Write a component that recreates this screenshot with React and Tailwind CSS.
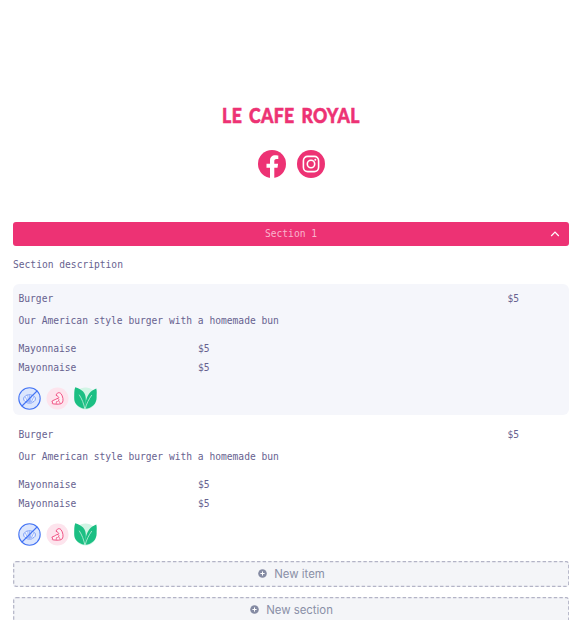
const mono = "font-['DejaVu_Sans_Mono',monospace] text-[9.62px] leading-[16px] whitespace-pre";

function Facebook() {
  return (
    <svg className="h-7 w-7" viewBox="0 0 28 28">
      <circle cx="14" cy="14" r="14" fill="#ed3274" />
      <path d="M12 29V17.8H8.5v-4H12v-3.1c0-3.5 2-5.4 5.2-5.4 1.5 0 3.1.3 3.1.3V9h-1.8c-1.7 0-2.2 1-2.2 2.1v2.7h3.8l-.6 4h-3.2V29z" fill="#fff" />
    </svg>
  );
}

function Instagram() {
  return (
    <svg className="h-7 w-7" viewBox="0 0 28 28" fill="none" stroke="#fff" strokeWidth="1.6">
      <circle cx="14" cy="14" r="14" fill="#ed3274" stroke="none" />
      <rect x="6.4" y="6.4" width="15.2" height="15.2" rx="4.3" />
      <circle cx="14" cy="14" r="3.7" />
      <circle cx="18.3" cy="9.7" r="1" fill="#fff" stroke="none" />
    </svg>
  );
}

function Shellfish() {
  return (
    <svg className="h-[23px] w-[23px]" viewBox="0 0 23 23" fill="none" stroke="#4474f4" strokeLinecap="round" strokeLinejoin="round">
      <circle cx="11.5" cy="11.5" r="10.7" fill="#dce6fd" strokeWidth="1.1" />
      <path d="M8.5 15.2C6.2 14.6 5 12.4 5.9 10.6c.4-1 1.1-1.2 1.7-1.5.7-1 1.7-1.3 2.5-1 1-.6 2-.6 2.9 0 1-.2 1.9.2 2.5 1 .7.3 1.3.7 1.7 1.5.8 1.8-.4 4-2.7 4.6l-1.2.8H9.7z" fill="#f1f5ff" strokeWidth=".65" />
      <path d="M9.5 14.6 7.4 10M10.6 14.8 9.8 8.8M11.5 15V8.6M12.4 14.8l.8-6M13.5 14.6l2.1-4.6" strokeWidth=".5" />
      <path d="M4 19 19 4" strokeWidth="1.1" />
    </svg>
  );
}

function Shrimp() {
  return (
    <svg className="h-[23px] w-[23px]" viewBox="0 0 23 23" fill="none" stroke="#ee4379" strokeLinecap="round" strokeLinejoin="round">
      <circle cx="11.5" cy="11.5" r="11" fill="#fde4ed" stroke="none" />
      <path d="M10.4 8.2c-.2-2.5 3-3.4 4.6-1.5 2 2.5 2.7 7 1.3 9.1-1.4 1.7-6.2 1.6-9.5 1-1-.3-.9-1.3.2-1.6-1.4-.2-1.3-1.4-.2-1.6 2-.2 2.7-1.8 4.6-2.1 1.2-.2 1.8-1.2.8-1.9-.6-.5-1.3-.6-1.8-1.4z" fill="#fff0f5" strokeWidth=".9" />
      <path d="M11.4 11.5c1.6-.1 2.1 1 1.2 2.1l-1.3 1.3M12.6 13.6l1.7 2.7M10.5 14.6l-.4 2.1" strokeWidth=".7" />
    </svg>
  );
}

function Leaves() {
  return (
    <svg className="-ml-px h-[23px] w-[25px]" viewBox="0 0 25 23">
      <circle cx="12.5" cy="11.5" r="11" fill="#d1f5e5" />
      <path d="M2.2.3C8.6 2 13.4 6 12.8 13c-.1 3.5-.6 6.5-1.2 8.8C5 20.5 1.1 17 1.2 10.8 1.3 7 1 3.5 2.2.3Z" fill="#1bbf83" />
      <path d="M23.3 1.4c.8 3.4.3 5.5.3 9 0 6.3-4.5 10.6-11.4 11.4-.3-2.8-.2-5.2.8-8.2C14.4 8.2 17.3 3.4 23.3 1.4Z" fill="#1bbf83" />
      <path d="M6.2 7.7c2.8 4.4 4.6 9 5.6 14.1M18.8 8c-3 4.3-5.3 8.7-6.6 13.8" fill="none" stroke="#c5f0df" strokeWidth=".8" />
    </svg>
  );
}

function Item({ shaded }) {
  return (
    <div className={`${mono} h-[131px] rounded-[6px] px-[5.5px] pt-[7px] ${shaded ? "bg-[#f5f6fb]" : "bg-white"}`}>
      <div className="flex">
        <span className="w-[489px]">Burger</span><span>$5</span>
      </div>
      <p className="mt-[5.5px]">Our American style burger with a homemade bun</p>
      <div className="mt-[12.5px] flex"><span className="w-[179.5px]">Mayonnaise</span><span>$5</span></div>
      <div className="mt-[3px] flex"><span className="w-[179.5px]">Mayonnaise</span><span>$5</span></div>
      <div className="-ml-[.5px] mt-[10.5px] flex gap-[5px]"><Shellfish /><Shrimp /><Leaves /></div>
    </div>
  );
}

function AddButton({ children }) {
  return (
    <div className="relative flex h-[26px] w-full items-center justify-center gap-[7px] rounded-[3px] bg-[#f4f5f8] pl-px font-['Inter',sans-serif] text-[11.4px] text-[#8a90a7]">
      <svg className="absolute inset-0 h-full w-full"><rect x=".7" y=".7" width="555" height="24.6" rx="2.5" fill="none" stroke="#b3b4c6" strokeWidth="1.2" strokeDasharray="3.4 2.2" /></svg>
      <svg className="-mt-px h-[9px] w-[9px]" viewBox="0 0 9 9"><circle cx="4.5" cy="4.5" r="4.3" fill="#858ba3" /><path d="M4.5 2.4v4.2M2.4 4.5h4.2" stroke="#fff" /></svg>
      <span className="pt-px">{children}</span>
    </div>
  );
}

export default function App() {
  return (
    <main className="flex h-[620px] w-[582px] flex-col overflow-hidden bg-white pl-[13px] pr-[13px] pt-[104px] text-[#67628f]">
      <h1 className="flex h-[23px] items-center justify-center font-['Lato',sans-serif] text-[21.5px] font-black leading-[23px] text-[#ed3274]">
        <span className="scale-x-[0.82] whitespace-nowrap tracking-[0.4px] [-webkit-text-stroke:0.6px_#ed3274] [word-spacing:3px]">LE CAFE ROYAL</span>
      </h1>
      <div className="mt-[23px] flex shrink-0 justify-center gap-[11px]"><Facebook /><Instagram /></div>
      <div className={`${mono} mt-[44px] flex h-[23.5px] shrink-0 items-center justify-center rounded-[3px] bg-[#ed3274] text-[#f9b5cd]`}>
        <span className="ml-auto pl-[19px] pt-px">Section 1</span>
        <svg className="ml-auto mr-[9px] h-[10px] w-[10px]" viewBox="0 0 10 10"><path d="m1.2 7 3.8-3.8L8.8 7" fill="none" stroke="#fff" strokeWidth="1.2" /></svg>
      </div>
      <p className={`${mono} mb-[11px] mt-[11.5px]`}>Section description</p>
      <section className="flex shrink-0 flex-col gap-[5px]"><Item shaded /><Item /></section>
      <div className="mt-[10px] flex shrink-0 flex-col gap-[10px]"><AddButton>New item</AddButton><AddButton>New section</AddButton></div>
    </main>
  );
}
